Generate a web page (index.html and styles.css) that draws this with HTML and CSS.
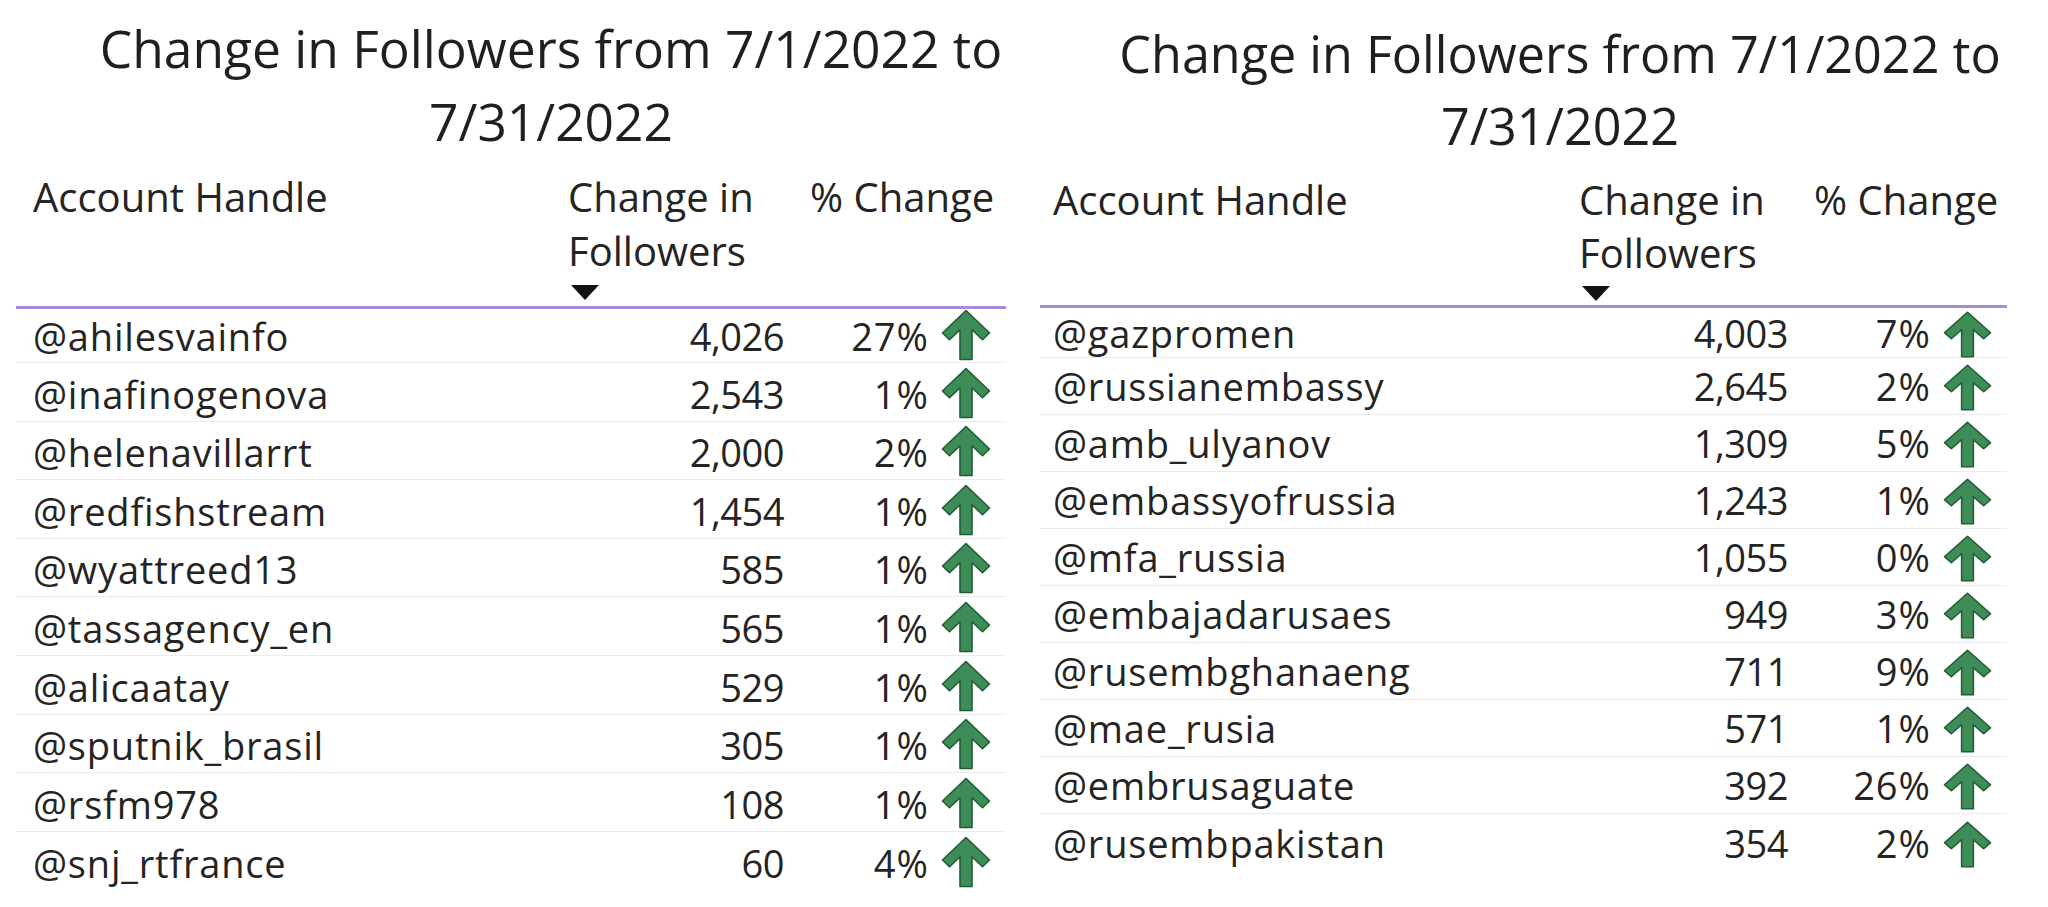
FILE: index.html
```html
<!DOCTYPE html>
<html>
<head>
<meta charset="utf-8">
<link rel="stylesheet" href="styles.css">
</head>
<body>
<svg width="0" height="0" class="defs">
  <defs>
    <symbol id="up" viewBox="0 0 50 54" preserveAspectRatio="none">
      <path d="M25 1.5 L48.5 25 L41.5 32 L31 21.5 L31 52.5 L19 52.5 L19 21.5 L8.5 32 L1.5 25 Z" fill="#3e8c57" stroke="#215e35" stroke-width="1.6" stroke-linejoin="round"/>
    </symbol>
  </defs>
</svg>
<main class="page">
  <section class="panel panel-left">
    <h1 class="title">Change in Followers from 7/1/2022 to 7/31/2022</h1>
    <div class="table">
      <div class="row head">
        <div class="cell c-handle">Account Handle</div>
        <div class="cell c-num-h">Change in Followers<span class="sort"></span></div>
        <div class="cell c-pct-h">% Change</div>
      </div>
      <div class="body">
        <div class="row"><div class="cell c-handle">@ahilesvainfo</div><div class="cell c-num">4,026</div><div class="cell c-pct"><span>27%</span><svg class="arrow"><use href="#up"/></svg></div></div>
        <div class="row"><div class="cell c-handle">@inafinogenova</div><div class="cell c-num">2,543</div><div class="cell c-pct"><span>1%</span><svg class="arrow"><use href="#up"/></svg></div></div>
        <div class="row"><div class="cell c-handle">@helenavillarrt</div><div class="cell c-num">2,000</div><div class="cell c-pct"><span>2%</span><svg class="arrow"><use href="#up"/></svg></div></div>
        <div class="row"><div class="cell c-handle">@redfishstream</div><div class="cell c-num">1,454</div><div class="cell c-pct"><span>1%</span><svg class="arrow"><use href="#up"/></svg></div></div>
        <div class="row"><div class="cell c-handle">@wyattreed13</div><div class="cell c-num">585</div><div class="cell c-pct"><span>1%</span><svg class="arrow"><use href="#up"/></svg></div></div>
        <div class="row"><div class="cell c-handle">@tassagency_en</div><div class="cell c-num">565</div><div class="cell c-pct"><span>1%</span><svg class="arrow"><use href="#up"/></svg></div></div>
        <div class="row"><div class="cell c-handle">@alicaatay</div><div class="cell c-num">529</div><div class="cell c-pct"><span>1%</span><svg class="arrow"><use href="#up"/></svg></div></div>
        <div class="row"><div class="cell c-handle">@sputnik_brasil</div><div class="cell c-num">305</div><div class="cell c-pct"><span>1%</span><svg class="arrow"><use href="#up"/></svg></div></div>
        <div class="row"><div class="cell c-handle">@rsfm978</div><div class="cell c-num">108</div><div class="cell c-pct"><span>1%</span><svg class="arrow"><use href="#up"/></svg></div></div>
        <div class="row last"><div class="cell c-handle">@snj_rtfrance</div><div class="cell c-num">60</div><div class="cell c-pct"><span>4%</span><svg class="arrow"><use href="#up"/></svg></div></div>
      </div>
    </div>
  </section>
  <section class="panel panel-right">
    <h1 class="title">Change in Followers from 7/1/2022 to 7/31/2022</h1>
    <div class="table">
      <div class="row head">
        <div class="cell c-handle">Account Handle</div>
        <div class="cell c-num-h">Change in Followers<span class="sort"></span></div>
        <div class="cell c-pct-h">% Change</div>
      </div>
      <div class="body">
        <div class="row"><div class="cell c-handle">@gazpromen</div><div class="cell c-num">4,003</div><div class="cell c-pct"><span>7%</span><svg class="arrow"><use href="#up"/></svg></div></div>
        <div class="row"><div class="cell c-handle">@russianembassy</div><div class="cell c-num">2,645</div><div class="cell c-pct"><span>2%</span><svg class="arrow"><use href="#up"/></svg></div></div>
        <div class="row"><div class="cell c-handle">@amb_ulyanov</div><div class="cell c-num">1,309</div><div class="cell c-pct"><span>5%</span><svg class="arrow"><use href="#up"/></svg></div></div>
        <div class="row"><div class="cell c-handle">@embassyofrussia</div><div class="cell c-num">1,243</div><div class="cell c-pct"><span>1%</span><svg class="arrow"><use href="#up"/></svg></div></div>
        <div class="row"><div class="cell c-handle">@mfa_russia</div><div class="cell c-num">1,055</div><div class="cell c-pct"><span>0%</span><svg class="arrow"><use href="#up"/></svg></div></div>
        <div class="row"><div class="cell c-handle">@embajadarusaes</div><div class="cell c-num">949</div><div class="cell c-pct"><span>3%</span><svg class="arrow"><use href="#up"/></svg></div></div>
        <div class="row"><div class="cell c-handle">@rusembghanaeng</div><div class="cell c-num">711</div><div class="cell c-pct"><span>9%</span><svg class="arrow"><use href="#up"/></svg></div></div>
        <div class="row"><div class="cell c-handle">@mae_rusia</div><div class="cell c-num">571</div><div class="cell c-pct"><span>1%</span><svg class="arrow"><use href="#up"/></svg></div></div>
        <div class="row"><div class="cell c-handle">@embrusaguate</div><div class="cell c-num">392</div><div class="cell c-pct"><span>26%</span><svg class="arrow"><use href="#up"/></svg></div></div>
        <div class="row last"><div class="cell c-handle">@rusembpakistan</div><div class="cell c-num">354</div><div class="cell c-pct"><span>2%</span><svg class="arrow"><use href="#up"/></svg></div></div>
      </div>
    </div>
  </section>
</main>
</body>
</html>
```
FILE: styles.css
```css
* { box-sizing: border-box; }
html, body {
  margin: 0;
  padding: 0;
  background: #ffffff;
}
body {
  width: 2048px;
  height: 907px;
  overflow: hidden;
  font-family: "Open Sans", "Noto Sans", "Liberation Sans", sans-serif;
  color: #252423;
}
.defs { position: absolute; width: 0; height: 0; }

.page {
  display: flex;
  gap: 34px;
  padding-left: 16px;
}

.panel {
  --title-size: 51.5px;
  --title-lh: 73px;
  --title-top: 12px;
  --title-pad: 80px;
  --head-top: 12px;
  --head-lh: 54px;
  --head-pb: 6px;
  --row-h: 58.6px;
  --first-h: 54px;
  --row-pb: 2px;
  --arrow-w: 50px;
  --arrow-h: 52px;
  --col2: 236px;
  --col3: 210px;
  --handle-pad: 17px;
  display: flex;
  flex-direction: column;
}
.panel-left { width: 990px; }
.panel-right {
  width: 967px;
  --title-size: 50.3px;
  --title-lh: 72px;
  --title-top: 18px;
  --title-pad: 73px;
  --head-top: 11px;
  --head-lh: 53px;
  --head-pb: 4px;
  --row-h: 57px;
  --first-h: 49.5px;
  --row-pb: 3px;
  --arrow-w: 49px;
  --arrow-h: 47px;
  --col2: 229px;
  --col3: 207px;
  --handle-pad: 13px;
}

.title {
  margin: 0;
  padding: var(--title-top) 0 0 var(--title-pad);
  font-size: var(--title-size);
  line-height: var(--title-lh);
  font-weight: 400;
  text-align: center;
  color: #1f1f1f;
}

.table {
  display: flex;
  flex-direction: column;
  padding-top: var(--head-top);
}

.body {
  display: flex;
  flex-direction: column;
}

.row {
  display: grid;
  grid-template-columns: 1fr var(--col2) var(--col3);
  height: var(--row-h);
  flex: none;
  align-items: end;
  padding-bottom: var(--row-pb);
  border-bottom: 1px solid #ececec;
  font-size: 38px;
  line-height: 50px;
}
.body .row:first-child { height: var(--first-h); }
.row.last { border-bottom: none; }

.row.head {
  height: auto;
  align-items: start;
  padding-bottom: var(--head-pb);
  font-size: 40px;
  line-height: var(--head-lh);
  border-bottom: 3px solid #a68cd8;
}

.cell { white-space: nowrap; }
.c-handle { padding-left: var(--handle-pad); }
.body .c-handle { letter-spacing: 0.8px; }
.c-num-h {
  padding-left: 8px;
  white-space: normal;
  width: 210px;
  display: flex;
  flex-direction: column;
}
.c-pct-h { padding-left: 14px; }

.sort {
  display: block;
  width: 0;
  height: 0;
  margin-top: 7px;
  margin-left: 3px;
  border-left: 14px solid transparent;
  border-right: 14px solid transparent;
  border-top: 15px solid #111111;
}

.c-num {
  text-align: right;
  padding-right: 12px;
  letter-spacing: -0.5px;
}
.c-pct {
  display: flex;
  align-items: flex-end;
  justify-content: flex-end;
  padding-right: 15px;
  letter-spacing: 1px;
}
.arrow {
  width: var(--arrow-w);
  height: var(--arrow-h);
  margin-left: 12px;
  flex: none;
}
```
